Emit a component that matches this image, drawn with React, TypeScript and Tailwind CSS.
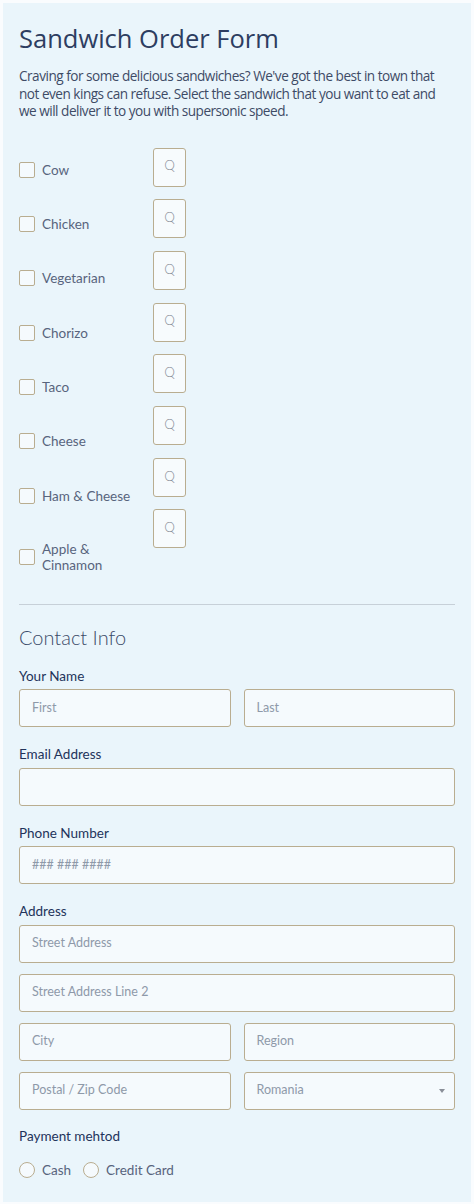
import React from 'react';

const sandwiches = ['Cow', 'Chicken', 'Vegetarian', 'Chorizo', 'Taco', 'Cheese', 'Ham & Cheese'];

const body = { fontFamily: 'Lato, "Noto Sans", sans-serif' };
const heading = { fontFamily: '"Open Sans", "Noto Sans", sans-serif' };

function Box({ placeholder, children }: { placeholder?: string; children?: React.ReactNode }) {
  return (
    <div className="relative flex h-[38px] w-full items-center rounded-[3px] border border-[#b9ad90] bg-[#f5fafd] px-3 text-[12.5px] text-[#8e99a9]">
      {placeholder}
      {children}
    </div>
  );
}

function Label({ children }: { children: React.ReactNode }) {
  return <div className="mb-[3.5px] text-[13.5px] leading-5 text-[#22335a]">{children}</div>;
}

export default function App() {
  return (
    <div className="min-h-screen bg-[#fafcfe] p-[3px]" style={body}>
      <div className="bg-[#eaf5fb] px-4 pt-[18px] pb-[21px]">
        <h1 className="text-[25.5px] leading-[34px] text-[#2d3d61]" style={heading}>
          Sandwich Order Form
        </h1>
        <p className="mt-3 text-[13.6px] leading-[17.5px] tracking-[-0.5px] text-[#3e4b66]" style={heading}>
          Craving for some delicious sandwiches? We've got the best in town that not even kings can refuse. Select the sandwich that you want to eat and we will deliver it to you with supersonic speed.
        </p>

        <div className="mt-7 flex items-start">
          <div className="flex w-[134px] flex-col gap-[38.4px] pt-[14px]">
            {sandwiches.map((s) => (
              <div key={s} className="flex items-center gap-[7px]">
                <span className="h-4 w-4 shrink-0 rounded-[2px] border border-[#b9ad90] bg-[#f5fafd]" />
                <span className="text-[13.5px] leading-4 text-[#58647d]">{s}</span>
              </div>
            ))}
            <div className="-mt-[1.4px] flex items-center gap-[7px]">
              <span className="h-4 w-4 shrink-0 rounded-[2px] border border-[#b9ad90] bg-[#f5fafd]" />
              <span className="text-[13.5px] leading-4 text-[#58647d]">
                Apple &amp;
                <br />
                Cinnamon
              </span>
            </div>
          </div>
          <div className="flex flex-col gap-[12.7px]">
            {[...sandwiches, 'Apple'].map((s) => (
              <div
                key={s}
                className="flex h-[39px] w-[33px] items-center justify-center rounded-[3px] border border-[#b9ad90] bg-[#f7fbfd] pb-[3px] text-[13.5px] font-light text-[#8a909a]"
              >
                Q
              </div>
            ))}
          </div>
        </div>

        <div className="mt-[31px] h-px bg-[#c7d0d8]" />

        <h2 className="mt-[18px] text-[20px] leading-7 font-light text-[#3b4a68]">Contact Info</h2>

        <div className="mt-[15px]">
          <Label>Your Name</Label>
          <div className="flex gap-[13px]">
            <Box placeholder="First" />
            <Box placeholder="Last" />
          </div>
        </div>

        <div className="mt-[17px]">
          <Label>Email Address</Label>
          <Box />
        </div>

        <div className="mt-[17px]">
          <Label>Phone Number</Label>
          <Box placeholder="### ### ####" />
        </div>

        <div className="mt-[17px]">
          <Label>Address</Label>
          <div className="flex flex-col gap-[11px]">
            <Box placeholder="Street Address" />
            <Box placeholder="Street Address Line 2" />
            <div className="flex gap-[13px]">
              <Box placeholder="City" />
              <Box placeholder="Region" />
            </div>
            <div className="flex gap-[13px]">
              <Box placeholder="Postal / Zip Code" />
              <Box placeholder="Romania">
                <span className="absolute right-[9px] top-1/2 -translate-y-1/2 border-x-[3.5px] border-t-[4px] border-x-transparent border-t-[#8a8f98]" />
              </Box>
            </div>
          </div>
        </div>

        <div className="mt-[16.5px]">
          <Label>Payment mehtod</Label>
          <div className="mt-[14px] flex items-center text-[13.5px] text-[#58647d]">
            <span className="h-4 w-4 rounded-full border border-[#b9ad90] bg-[#f5fafd]" />
            <span className="ml-[7px]">Cash</span>
            <span className="ml-[12px] h-4 w-4 rounded-full border border-[#b9ad90] bg-[#f5fafd]" />
            <span className="ml-[7px]">Credit Card</span>
          </div>
        </div>
      </div>
    </div>
  );
}
